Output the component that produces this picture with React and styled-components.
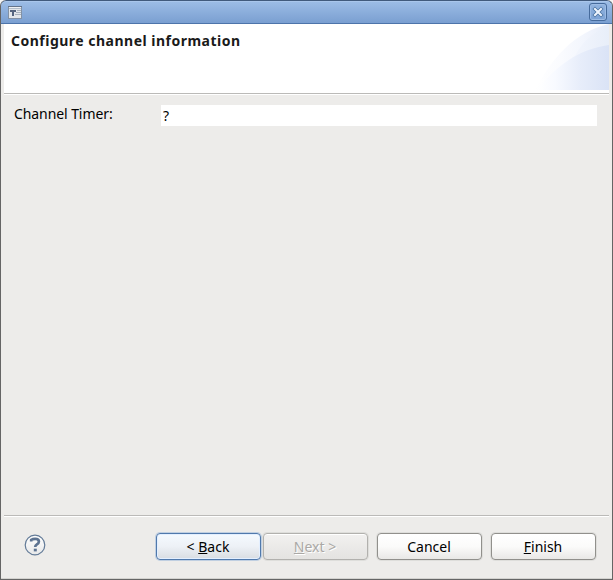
import React from "react";
import styled, { createGlobalStyle } from "styled-components";

const GlobalStyle = createGlobalStyle`
  * { box-sizing: border-box; }
  body { margin: 0; overflow: hidden; background: #f4f4f4; }
`;

const Window = styled.div`
  width: 613px;
  height: 580px;
  display: flex;
  flex-direction: column;
  border: 1px solid #656565;
  border-top: 0;
  border-radius: 6px 6px 0 0;
  background: #edecea;
  overflow: hidden;
  color: #000;
  font: 14px/20px "Noto Sans", "Open Sans", sans-serif;
`;

const TitleBar = styled.header`
  height: 24px;
  flex: none;
  margin: 0 -1px;
  padding: 0 5px 0 7px;
  display: flex;
  align-items: center;
  justify-content: space-between;
  border: 1px solid #415a7c;
  border-bottom-color: #4d74aa;
  border-radius: 6px 6px 0 0;
  background: linear-gradient(#9dbde6, #7a9fd1);
  box-shadow: inset 0 1px #a9c6eb;
  svg { display: block; }
`;

const CloseButton = styled.button`
  width: 18px;
  height: 18px;
  padding: 0;
  display: grid;
  place-items: center;
  border: 1px solid #466b9c;
  border-radius: 3px;
  background: linear-gradient(#91b3df, #7da3d5);
  box-shadow: inset 0 0 0 1px #9dbce4;
`;

const Banner = styled.section`
  height: 69px;
  flex: none;
  margin: 0 3px;
  padding-left: 7px;
  display: flex;
  justify-content: space-between;
  background: #fff;
  svg { display: block; flex: none; }
`;

const Heading = styled.h1`
  margin: 7px 0 0;
  font-size: 14px;
  line-height: 20px;
  font-weight: 700;
  color: #1a1a1a;
  white-space: nowrap;
  letter-spacing: 0.49px;
`;

const Separator = styled.div`
  height: 2px;
  flex: none;
  margin: 0 3px;
  border-top: 1px solid #bbbab8;
  border-bottom: 1px solid #fff;
`;

const Form = styled.main`
  flex: 1;
  padding: 10px 15px 0 13px;
`;

const FieldRow = styled.label`
  display: grid;
  grid-template-columns: 147px 1fr;
  height: 21px;
`;

const FieldLabel = styled.span`
  line-height: 18px;
  letter-spacing: -0.08px;
`;

const TextField = styled.input`
  width: 100%;
  height: 21px;
  padding: 0 2px 1px;
  border: 0;
  outline: 0;
  background: #fff;
  color: #000;
  font: inherit;
`;

const Footer = styled.footer`
  height: 62px;
  flex: none;
  padding: 16px 16px 0 23px;
  display: flex;
  align-items: flex-start;
  justify-content: space-between;
  border-bottom: 1px solid #d3d2cf;
  svg { display: block; margin-top: 1px; }
`;

const Actions = styled.div`
  display: flex;
  gap: 9px;
`;

const ButtonPair = styled.div`
  display: flex;
  gap: 2px;
`;

const Button = styled.button`
  width: 105px;
  height: 27px;
  padding: 1px 1px 0 0;
  border: 1px solid ${p => (p.$focused ? "#5079ac" : p.disabled ? "#b2b1ae" : "#91908c")};
  border-radius: 4px;
  background: ${p =>
    p.$focused
      ? "linear-gradient(#f5faff, #edf1f6 50%, #d9dde2)"
      : p.disabled
        ? "linear-gradient(#f2f1f0, #e4e3e1)"
        : "linear-gradient(#ffffff, #fbfbfa 50%, #e9e8e6)"};
  box-shadow: ${p =>
    p.$focused
      ? "0 0 0 1px rgba(110, 154, 208, 0.35), inset 0 0 0 1px #e3efff"
      : "0 0 0 1px rgba(190, 189, 185, 0.3), inset 0 1px #fff"};
  color: ${p => (p.disabled ? "#aaa8a5" : "#000")};
  text-shadow: ${p => (p.disabled ? "1px 1px #fff" : "none")};
  font: 14px/20px "Noto Sans", "Open Sans", sans-serif;
`;

const Mnemonic = styled.span`
  text-decoration: underline;
  text-decoration-thickness: 1px;
  text-underline-offset: 1px;
  text-decoration-skip-ink: none;
`;

const WindowIcon = () => (
  <svg width="14" height="13" viewBox="0 0 14 13" shapeRendering="crispEdges">
    <path d="M.5.5h13v12H.5z" fill="#e2e6ea" stroke="#8291a5" />
    <path d="M0 0h14v1H0z" fill="#64748a" />
    <path d="M1 1h12v1H1z" fill="#eef0f2" />
    <path d="M1 2h12v1H1z" fill="#b3bdc9" />
    <path d="M2 4h6v2H2zM4 6h2v4H4z" fill="#54647e" />
    <path d="M9 4h4v1H9zM8 6h5v1H8zM7 8h6v1H7z" fill="#a6b0bc" />
  </svg>
);

const CloseIcon = () => (
  <svg width="12" height="12" viewBox="0 0 12 12" fill="none" strokeLinecap="square">
    <path d="M3 3l6 6M9 3L3 9" stroke="#47709f" strokeWidth="3.6" />
    <path d="M3 3l6 6M9 3L3 9" stroke="#edf4fd" strokeWidth="2.1" />
  </svg>
);

const BannerArt = () => (
  <svg width="74" height="66" viewBox="0 0 74 66">
    <defs>
      <linearGradient id="outer" x1="0" x2="1">
        <stop offset="0" stopColor="#fff" />
        <stop offset=".35" stopColor="#fafbfe" />
        <stop offset=".65" stopColor="#f3f6fd" />
        <stop offset="1" stopColor="#e8edf9" />
      </linearGradient>
      <linearGradient id="middle" x1="0" x2="1">
        <stop offset="0" stopColor="#f3f6fd" />
        <stop offset="1" stopColor="#e8eef9" />
      </linearGradient>
      <linearGradient id="inner" x1="0" x2="1">
        <stop offset="0" stopColor="#fff" />
        <stop offset=".25" stopColor="#f8faff" />
        <stop offset=".6" stopColor="#e7edfa" />
        <stop offset="1" stopColor="#dae3f6" />
      </linearGradient>
    </defs>
    <path d="M0 66C17 34 39 8 74 0V66Z" fill="url(#outer)" />
    <path d="M38 36C45 20 57 8 74 2V30Z" fill="url(#middle)" />
    <path d="M2 66C20 43 43 25 74 21V66Z" fill="url(#inner)" />
  </svg>
);

const HelpIcon = () => (
  <svg width="22" height="22" viewBox="0 0 22 22" fill="none">
    <defs>
      <linearGradient id="help" x1="0" y1="0" x2="0" y2="1">
        <stop stopColor="#fff" />
        <stop offset="1" stopColor="#e7e8e9" />
      </linearGradient>
    </defs>
    <circle cx="11" cy="11" r="9.8" fill="url(#help)" stroke="#627a97" strokeWidth="1.2" />
    <path d="M7.2 7.5V5.9Q8.8 4.9 11.1 4.9Q14.9 4.9 14.9 7.5Q14.9 9.2 12.9 10.4Q11.2 11.4 11.2 13.1" stroke="#5d7391" strokeWidth="2.7" />
    <path d="M9.8 14.7h3v2.7h-3z" fill="#5d7391" />
  </svg>
);

export default function App() {
  return (
    <>
      <GlobalStyle />
      <Window>
        <TitleBar>
          <WindowIcon />
          <CloseButton aria-label="Close"><CloseIcon /></CloseButton>
        </TitleBar>
        <Banner>
          <Heading>Configure channel information</Heading>
          <BannerArt />
        </Banner>
        <Separator />
        <Form>
          <FieldRow>
            <FieldLabel>Channel Timer:</FieldLabel>
            <TextField defaultValue="?" />
          </FieldRow>
        </Form>
        <Separator />
        <Footer>
          <HelpIcon />
          <Actions>
            <ButtonPair>
              <Button $focused>&lt; <Mnemonic>B</Mnemonic>ack</Button>
              <Button disabled><Mnemonic>N</Mnemonic>ext &gt;</Button>
            </ButtonPair>
            <Button>Cancel</Button>
            <Button><Mnemonic>F</Mnemonic>inish</Button>
          </Actions>
        </Footer>
      </Window>
    </>
  );
}
